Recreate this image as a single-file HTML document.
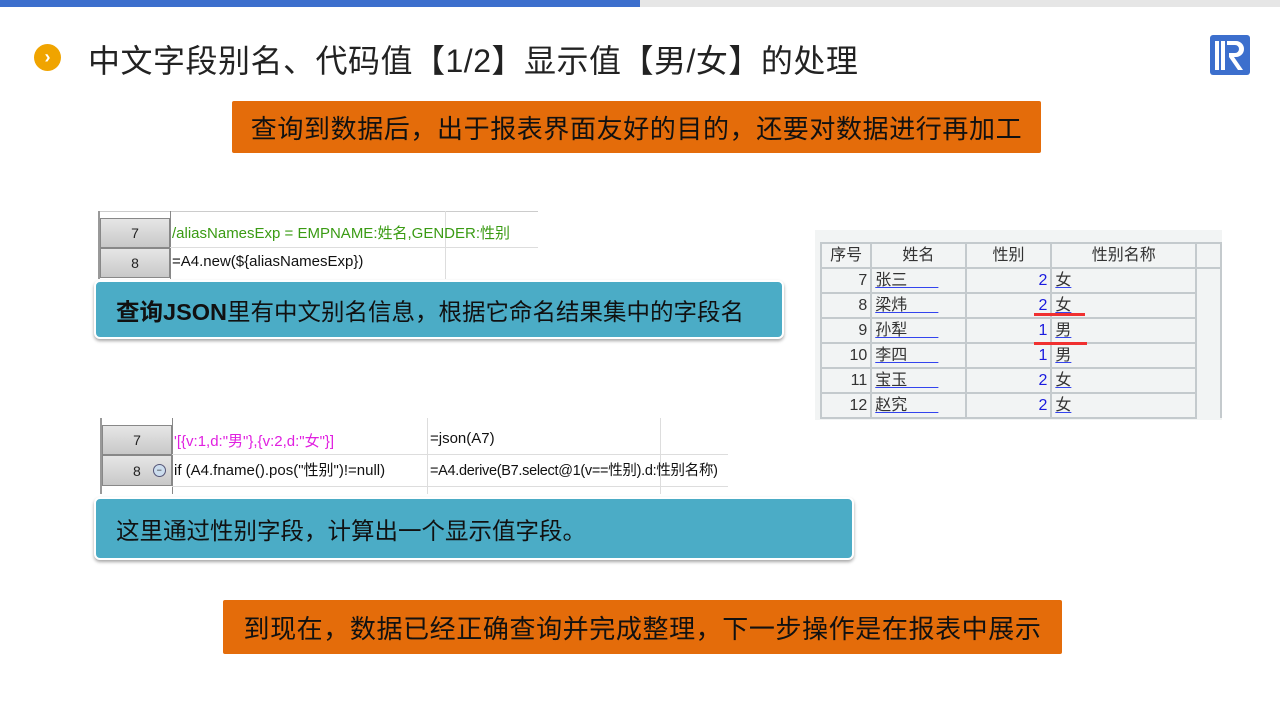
<!DOCTYPE html>
<html><head><meta charset="utf-8"><style>
body{margin:0;width:1280px;height:720px;position:relative;background:#fff;font-family:"Liberation Sans","Noto Sans CJK SC",sans-serif;overflow:hidden}
.a{position:absolute}
.or{position:absolute;background:#e46c0a;color:#111;font-size:26px;letter-spacing:0.6px;display:flex;align-items:center;justify-content:center;border-radius:2px}
.tl{position:absolute;background:#4bacc6;color:#111;font-size:23.5px;display:flex;align-items:center;padding-left:20px;box-sizing:border-box;border-radius:6px;box-shadow:0 2px 3px rgba(0,0,0,.35);border:2px solid #fff}
.rh{position:absolute;background:linear-gradient(#e6e6e6,#c8c8c8);border:1px solid #888;box-sizing:border-box;font-size:14px;display:flex;align-items:center;justify-content:center;color:#222}
.c{position:absolute;font-size:15px;white-space:nowrap}
table{border-collapse:collapse;font-size:16px;color:#333}
td{border:2px solid #c4cacd;height:23px;padding:0 3px;background:#f2f4f4;vertical-align:middle;white-space:nowrap;line-height:20px}
.n{text-align:right;color:#1a1adf}
.u{text-decoration:underline;text-decoration-color:#3344ee;text-underline-offset:2px}
</style></head><body>
<div class="a" style="left:0;top:0;width:640px;height:7px;background:#3c6fcd"></div>
<div class="a" style="left:640px;top:0;width:640px;height:7px;background:#e6e6e6"></div>
<div class="a" style="left:34px;top:44px;width:27px;height:27px;border-radius:50%;background:#f0a400;color:#fff;font-size:18px;font-weight:bold;text-align:center;line-height:26px">›</div>
<div class="a" style="left:88px;top:36px;font-size:32px;letter-spacing:0.5px;color:#222">中文字段别名、代码值【1/2】显示值【男/女】的处理</div>
<svg class="a" style="left:1210px;top:35px" width="40" height="40" viewBox="0 0 40 40"><rect width="40" height="40" rx="3" fill="#3c6fcd"/><rect x="5" y="6" width="4" height="29" fill="#fff"/><rect x="11" y="6" width="4" height="29" fill="#fff"/><path d="M17 6h9a8 8 0 0 1 0 16h-2l9 13h-5l-9-13v-4h6a4 4 0 0 0 0-8h-8z" fill="#fff"/></svg>
<div class="or" style="left:232px;top:101px;width:809px;height:52px">查询到数据后，出于报表界面友好的目的，还要对数据进行再加工</div>
<div class="or" style="left:223px;top:600px;width:839px;height:54px">到现在，数据已经正确查询并完成整理，下一步操作是在报表中展示</div>

<div class="a" style="left:98px;top:211px;width:440px;height:68px;background:#fff;border-top:1px solid #ccc"></div>
<div class="a" style="left:98px;top:211px;width:2px;height:68px;background:#999"></div>
<div class="a" style="left:170px;top:211px;width:1px;height:68px;background:#888"></div>
<div class="a" style="left:445px;top:211px;width:1px;height:68px;background:#ddd"></div>
<div class="a" style="left:170px;top:247px;width:368px;height:1px;background:#ddd"></div>
<div class="rh" style="left:100px;top:218px;width:70px;height:30px">7</div>
<div class="rh" style="left:100px;top:248px;width:70px;height:30px">8</div>
<div class="c" style="left:172px;top:222px;color:#3a9b13">/aliasNamesExp = EMPNAME:姓名,GENDER:性别</div>
<div class="c" style="left:172px;top:253px;color:#111">=A4.new(${aliasNamesExp})</div>
<div class="tl" style="left:94px;top:280px;width:690px;height:59px"><b>查询JSON</b>里有中文别名信息，根据它命名结果集中的字段名</div>

<div class="a" style="left:100px;top:418px;width:628px;height:76px;background:#fff"></div>
<div class="a" style="left:100px;top:418px;width:2px;height:76px;background:#999"></div>
<div class="a" style="left:172px;top:418px;width:1px;height:76px;background:#888"></div>
<div class="a" style="left:427px;top:418px;width:1px;height:76px;background:#ddd"></div>
<div class="a" style="left:660px;top:418px;width:1px;height:76px;background:#ddd"></div>
<div class="a" style="left:172px;top:454px;width:556px;height:1px;background:#ddd"></div>
<div class="a" style="left:172px;top:486px;width:556px;height:1px;background:#ddd"></div>
<div class="rh" style="left:102px;top:425px;width:70px;height:30px">7</div>
<div class="rh" style="left:102px;top:455px;width:70px;height:31px;justify-content:flex-start;padding-left:30px">8<span style="margin-left:12px;width:11px;height:11px;border-radius:50%;border:1px solid #557;background:#cde;font-size:9px;line-height:10px;text-align:center">−</span></div>
<div class="c" style="left:174px;top:430px;color:#e020e0">'[{v:1,d:"男"},{v:2,d:"女"}]</div>
<div class="c" style="left:430px;top:430px;color:#111">=json(A7)</div>
<div class="c" style="left:174px;top:459px;color:#111">if (A4.fname().pos("性别")!=null)</div>
<div class="c" style="left:430px;top:459px;color:#111;font-size:14.5px;letter-spacing:-0.3px">=A4.derive(B7.select@1(v==性别).d:性别名称)</div>
<div class="tl" style="left:94px;top:497px;width:760px;height:63px">这里通过性别字段，计算出一个显示值字段。</div>

<div class="a" style="left:815px;top:230px;width:407px;height:190px;background:#f2f4f4;padding:12px 0 0 5px;box-sizing:border-box">
<table>
<tr><td style="width:43px;text-align:center">序号</td><td style="width:88px;text-align:center">姓名</td><td style="width:81px;text-align:center">性别</td><td style="width:142px;text-align:center">性别名称</td><td style="width:18px"></td></tr>
<tr><td style="text-align:right">7</td><td><span class="u">张三&nbsp;&nbsp;&nbsp;&nbsp;&nbsp;&nbsp;&nbsp;</span></td><td class="n">2</td><td><span class="u">女</span></td><td rowspan="6" style="border-bottom:none"></td></tr>
<tr><td style="text-align:right">8</td><td><span class="u">梁炜&nbsp;&nbsp;&nbsp;&nbsp;&nbsp;&nbsp;&nbsp;</span></td><td class="n">2</td><td><span class="u">女</span></td></tr>
<tr><td style="text-align:right">9</td><td><span class="u">孙犁&nbsp;&nbsp;&nbsp;&nbsp;&nbsp;&nbsp;&nbsp;</span></td><td class="n">1</td><td><span class="u">男</span></td></tr>
<tr><td style="text-align:right">10</td><td><span class="u">李四&nbsp;&nbsp;&nbsp;&nbsp;&nbsp;&nbsp;&nbsp;</span></td><td class="n">1</td><td><span class="u">男</span></td></tr>
<tr><td style="text-align:right">11</td><td><span class="u">宝玉&nbsp;&nbsp;&nbsp;&nbsp;&nbsp;&nbsp;&nbsp;</span></td><td class="n">2</td><td><span class="u">女</span></td></tr>
<tr><td style="text-align:right">12</td><td><span class="u">赵究&nbsp;&nbsp;&nbsp;&nbsp;&nbsp;&nbsp;&nbsp;</span></td><td class="n">2</td><td><span class="u">女</span></td></tr>
</table></div>
<div class="a" style="left:1034px;top:313px;width:51px;height:3px;background:#f03030"></div>
<div class="a" style="left:1034px;top:342px;width:53px;height:3px;background:#f03030"></div>
</body></html>
